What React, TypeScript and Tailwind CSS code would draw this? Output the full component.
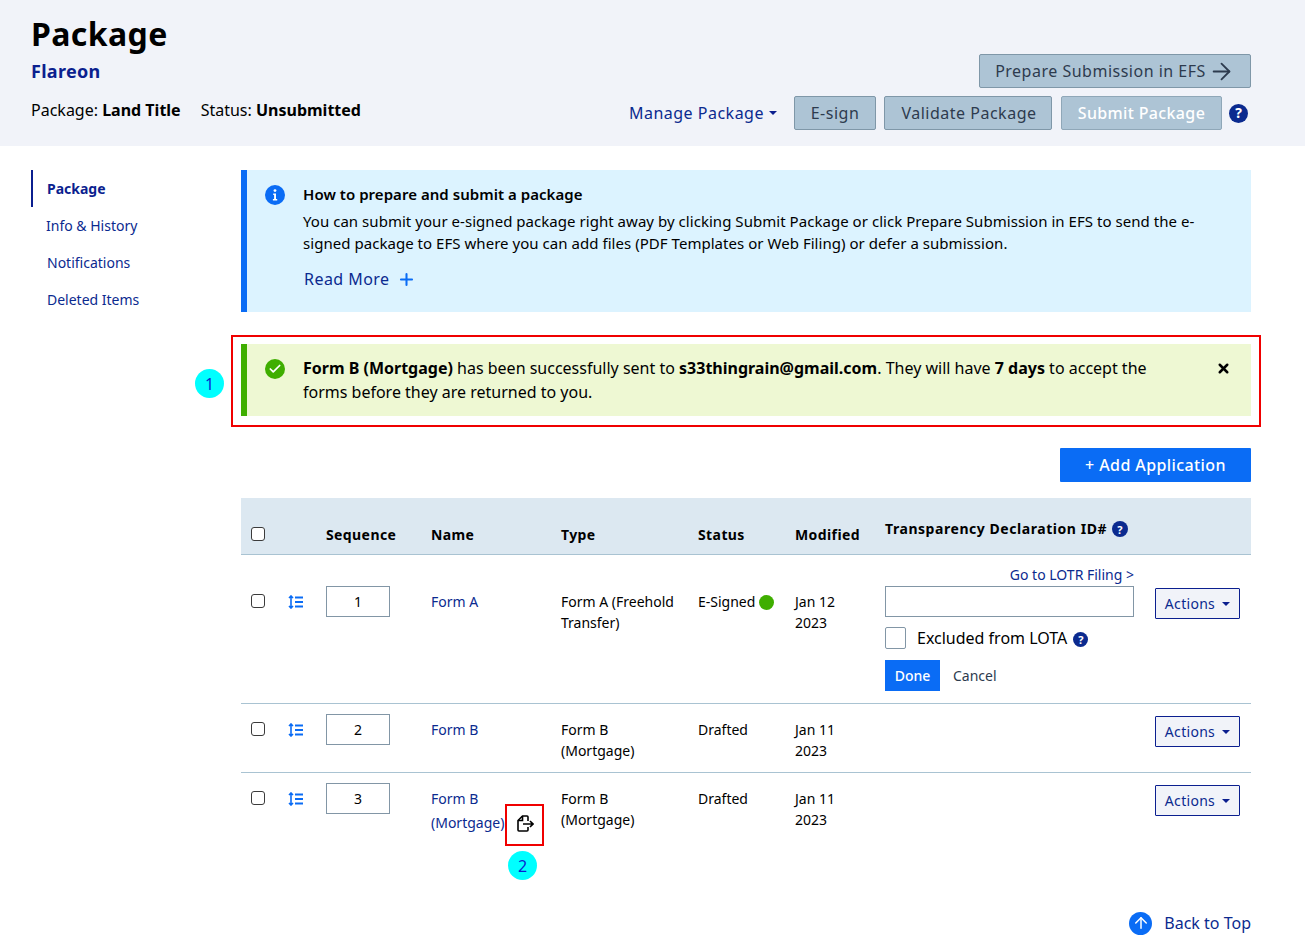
import { ArrowRight, ArrowUp, Check, Plus, X } from 'lucide-react'

const FONT = "font-['Noto_Sans',sans-serif]"

function Help({ size = 'w-[19px] h-[19px] text-[13px]' }: { size?: string }) {
  return (
    <span className={`${size} inline-flex items-center justify-center rounded-full bg-[#0b2a8f] text-white font-bold leading-none`}>?</span>
  )
}

function InfoIcon() {
  return (
    <svg width="20" height="20" viewBox="0 0 20 20">
      <circle cx="10" cy="10" r="10" fill="#0a6cf5" />
      <circle cx="10" cy="5.6" r="1.4" fill="#fff" />
      <path d="M8.2 8.5h2.8v5.6h1.2v1.4H7.9v-1.4h1.2V9.9h-.9z" fill="#fff" />
    </svg>
  )
}

function ReorderIcon() {
  return (
    <svg width="16" height="14" viewBox="0 0 16 14" fill="none" stroke="#0a6cf5" strokeWidth="1.6">
      <path d="M3 1.5v11M1 3l2-2 2 2M1 11l2 2 2-2" />
      <path d="M7 2.5h8M7 7h8M7 11.5h8" strokeWidth="1.8" />
    </svg>
  )
}

function SendIcon() {
  return (
    <svg width="19" height="19" viewBox="0 0 19 19" fill="none" stroke="#000" strokeWidth="1.6">
      <path d="M13 7V3a1 1 0 0 0-1-1H7.5L3 6.5V16a1 1 0 0 0 1 1h8a1 1 0 0 0 1-1v-3" />
      <path d="M7.5 2v4.5H3" />
      <path d="M8 10h10M15 7l3 3-3 3" />
    </svg>
  )
}

function ActionsButton() {
  return (
    <button className="w-[85px] h-[31px] border border-[#0b1f8f] bg-[#f1f3f9] text-[#0b2a8f] text-sm tracking-[0.3px] flex items-center justify-center gap-[7px] rounded-[1px]">
      Actions
      <span className="w-0 h-0 border-x-[4px] border-x-transparent border-t-[4px] border-t-[#0b1f8f]" />
    </button>
  )
}

function RowStart({ seq }: { seq: number }) {
  return (
    <>
      <div className="flex gap-[23px] pl-[10px] pt-[7px]">
        <span className="w-[14px] h-[14px] mt-[1px] rounded-[3px] border border-[#3b3b3b] bg-white shrink-0" />
        <span className="pt-[2px]"><ReorderIcon /></span>
      </div>
      <div>
        <div className="w-[64px] h-[31px] border border-[#8296a6] flex items-center justify-center text-sm text-black">{seq}</div>
      </div>
    </>
  )
}

const COLS = 'grid grid-cols-[85px_105px_130px_137px_97px_90px_270px_96px]'

export default function App() {
  return (
    <div className={`${FONT} relative w-[1305px] h-[945px] overflow-hidden bg-white text-black`}>
      <header className="h-[146px] bg-[#f1f3f9] pl-[31px] pr-[54px] flex justify-between">
        <div className="pt-[13px]">
          <h1 className="text-[32px] leading-[42px] font-bold tracking-[0.4px]">Package</h1>
          <div className="text-[18px] leading-[24px] font-bold tracking-[0.3px] text-[#0b1f8f] mt-[4px]">Flareon</div>
          <div className="text-base leading-[22px] mt-[16px] flex gap-[20px]">
            <span>Package: <b className="font-bold">Land Title</b></span>
            <span>Status: <b className="font-bold">Unsubmitted</b></span>
          </div>
        </div>
        <div className="pt-[54px] flex flex-col items-end gap-[8px]">
          <button className="h-[34px] w-[272px] bg-[#adc4d5] border border-[#7f97a8] rounded-[2px] text-[#2d3b4e] text-base tracking-[0.5px] flex items-center justify-center gap-[2px]">
            Prepare Submission in EFS <ArrowRight size={27} strokeWidth={1.6} />
          </button>
          <div className="flex items-center">
            <span className="text-base tracking-[0.5px] text-[#0b2a8f] flex items-center gap-[5px] mr-[17px]">
              Manage Package
              <span className="w-0 h-0 border-x-[4px] border-x-transparent border-t-[4px] border-t-[#0b1f8f]" />
            </span>
            <button className="h-[34px] w-[82px] bg-[#adc4d5] border border-[#7f97a8] rounded-[2px] text-[#2d3b4e] text-base tracking-[0.5px]">E-sign</button>
            <button className="h-[34px] w-[168px] ml-[8px] bg-[#adc4d5] border border-[#7f97a8] rounded-[2px] text-[#2d3b4e] text-base tracking-[0.5px] pl-[2px]">Validate Package</button>
            <button className="h-[34px] w-[161px] ml-[9px] bg-[#adc4d5] border border-[#8fa7b8] rounded-[2px] text-white text-base font-medium tracking-[0.35px]">Submit Package</button>
            <span className="ml-[7px] mr-[3px] flex"><Help size="w-[19px] h-[19px] text-[14px]" /></span>
          </div>
        </div>
      </header>

      <div className="flex">
        <nav className="w-[241px] shrink-0 pt-[24px] pl-[31px] text-sm text-[#0b2a8f]">
          <div className="h-[37px] border-l-2 border-[#0b1f8f] pl-[14px] flex items-center font-bold text-[#0b1f8f]">Package</div>
          <div className="h-[37px] pl-[15px] flex items-center">Info &amp; History</div>
          <div className="h-[37px] pl-[16px] flex items-center">Notifications</div>
          <div className="h-[37px] pl-[16px] flex items-center">Deleted Items</div>
        </nav>

        <main className="w-[1010px] pt-[24px]">
          <section className="h-[142px] bg-[#dcf3ff] border-l-[6px] border-[#0a6cf5] flex text-[15px] leading-[22px] tracking-[0.04px]">
            <div className="w-[56px] pl-[18px] pt-[15px]"><InfoIcon /></div>
            <div className="pt-[13px] w-[905px]">
              <div className="font-semibold">How to prepare and submit a package</div>
              <p className="mt-[5px]">You can submit your e-signed package right away by clicking Submit Package or click Prepare Submission in EFS to send the e-signed package to EFS where you can add files (PDF Templates or Web Filing) or defer a submission.</p>
              <div className="mt-[13px] ml-[1px] text-base tracking-[0.45px] text-[#0b2a8f] flex items-center gap-[7px]">
                Read More <Plus size={19} className="text-[#0a6cf5]" strokeWidth={2.6} />
              </div>
            </div>
          </section>

          <section className="mt-[32px] h-[72px] bg-[#eef8d3] border-l-[6px] border-[#3fae00] flex text-base leading-[24px]">
            <div className="w-[56px] pl-[18px] pt-[15px]">
              <span className="w-[20px] h-[20px] rounded-full bg-[#3fae00] flex items-center justify-center">
                <Check size={14} stroke="white" strokeWidth={3} />
              </span>
            </div>
            <p className="pt-[12px] w-[870px]">
              <b className="font-bold">Form B (Mortgage)</b> has been successfully sent to <b className="font-bold">s33thingrain@gmail.com</b>. They will have <b className="font-bold">7 days</b> to accept the forms before they are returned to you.
            </p>
            <div className="ml-auto pr-[20px] pt-[17px]"><X size={15} strokeWidth={4} /></div>
          </section>

          <div className="mt-[32px] flex justify-end">
            <button className="w-[191px] h-[34px] bg-[#0a6cf5] text-white text-base font-medium tracking-[0.4px] rounded-[1px]">+ Add Application</button>
          </div>

          <div className="mt-[16px] text-sm">
            <div className={`${COLS} h-[57px] bg-[#dce8f1] border-b border-[#a9c3d2] font-bold tracking-[0.4px] items-end pb-[9px]`}>
              <div className="pl-[10px] pb-[4px]"><span className="block w-[14px] h-[14px] rounded-[3px] border border-[#3b3b3b] bg-white" /></div>
              <div>Sequence</div>
              <div>Name</div>
              <div>Type</div>
              <div>Status</div>
              <div>Modified</div>
              <div className="col-span-2 flex items-center gap-[5px] self-start pt-[21px] tracking-[0.55px]">Transparency Declaration ID# <Help size="w-[16px] h-[16px] text-[11px]" /></div>
            </div>

            <div className={`${COLS} h-[149px] border-b border-[#a9c3d2] pt-[31px] leading-[21px]`}>
              <RowStart seq={1} />
              <div className="pt-[5px] text-[#0b2a8f]">Form A</div>
              <div className="pt-[5px] pr-2">Form A (Freehold Transfer)</div>
              <div className="pt-[5px] flex items-start gap-[4px]">E-Signed <span className="mt-[4px] w-[15px] h-[15px] rounded-full bg-[#3fae00]" /></div>
              <div className="pt-[5px]">Jan 12<br />2023</div>
              <div className="-mt-[21px] w-[249px]">
                <div className="text-right text-sm leading-[19px] text-[#0b2a8f] h-[21px]">Go to LOTR Filing &gt;</div>
                <div className="h-[31px] border border-[#8296a6] bg-white" />
                <div className="mt-[9px] flex items-center">
                  <span className="w-[21px] h-[22px] border border-[#8296a6] rounded-[2px]" />
                  <span className="ml-[11px] text-base">Excluded from LOTA</span>
                  <span className="ml-[6px] mt-[2px] flex"><Help size="w-[15px] h-[15px] text-[11px]" /></span>
                </div>
                <div className="mt-[10px] flex items-center">
                  <button className="w-[55px] h-[31px] bg-[#0a6cf5] text-white font-medium">Done</button>
                  <span className="ml-[13px] text-[#2d3b4e]">Cancel</span>
                </div>
              </div>
              <div className="pt-[2px]"><ActionsButton /></div>
            </div>

            <div className={`${COLS} h-[69px] border-b border-[#a9c3d2] pt-[10px] leading-[21px]`}>
              <RowStart seq={2} />
              <div className="pt-[5px] text-[#0b2a8f]">Form B</div>
              <div className="pt-[5px] pr-8">Form B (Mortgage)</div>
              <div className="pt-[5px]">Drafted</div>
              <div className="pt-[5px]">Jan 11<br />2023</div>
              <div />
              <div className="pt-[2px]"><ActionsButton /></div>
            </div>

            <div className={`${COLS} pt-[10px] leading-[21px]`}>
              <RowStart seq={3} />
              <div className="pt-[4px] text-[#0b2a8f] leading-[24px]">
                Form B<br />
                <span className="inline-flex items-center gap-[11px] whitespace-nowrap">(Mortgage)<SendIcon /></span>
              </div>
              <div className="pt-[5px] pr-8">Form B (Mortgage)</div>
              <div className="pt-[5px]">Drafted</div>
              <div className="pt-[5px]">Jan 11<br />2023</div>
              <div />
              <div className="pt-[2px]"><ActionsButton /></div>
            </div>
          </div>
        </main>
      </div>

      <div className="absolute right-[54px] top-[911px] flex items-center gap-[12px] text-base text-[#0b2a8f]">
        <span className="w-[23px] h-[23px] rounded-full bg-[#0a6cf5] flex items-center justify-center">
          <ArrowUp size={18} stroke="white" strokeWidth={2} />
        </span>
        Back to Top
      </div>

      <div className="absolute left-[231px] top-[335px] w-[1030px] h-[92px] border-2 border-[#f00000]" />
      <div className="absolute left-[195px] top-[369px] w-[29px] h-[29px] rounded-full bg-[#00ffff] flex items-center justify-center text-base text-[#0b1fd0]">1</div>
      <div className="absolute left-[505px] top-[804px] w-[39px] h-[42px] border-2 border-[#f00000]" />
      <div className="absolute left-[508px] top-[851px] w-[29px] h-[29px] rounded-full bg-[#00ffff] flex items-center justify-center text-base text-[#0b1fd0]">2</div>
    </div>
  )
}
